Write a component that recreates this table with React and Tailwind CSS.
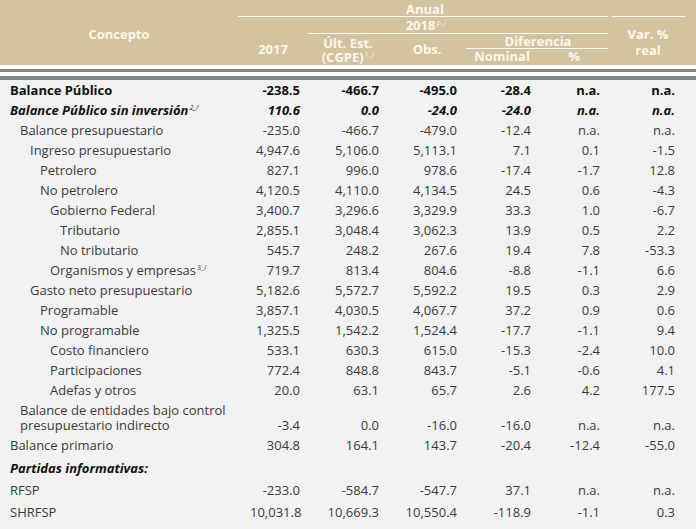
import React from "react";

const rows = [
  { label: "Balance Público", lv: 0, s: "b", v: ["-238.5", "-466.7", "-495.0", "-28.4", "n.a.", "n.a."] },
  { label: "Balance Público sin inversión", sup: "2_/", lv: 0, s: "bi", v: ["110.6", "0.0", "-24.0", "-24.0", "n.a.", "n.a."] },
  { label: "Balance presupuestario", lv: 1, v: ["-235.0", "-466.7", "-479.0", "-12.4", "n.a.", "n.a."] },
  { label: "Ingreso presupuestario", lv: 2, v: ["4,947.6", "5,106.0", "5,113.1", "7.1", "0.1", "-1.5"] },
  { label: "Petrolero", lv: 3, v: ["827.1", "996.0", "978.6", "-17.4", "-1.7", "12.8"] },
  { label: "No petrolero", lv: 3, v: ["4,120.5", "4,110.0", "4,134.5", "24.5", "0.6", "-4.3"] },
  { label: "Gobierno Federal", lv: 4, v: ["3,400.7", "3,296.6", "3,329.9", "33.3", "1.0", "-6.7"] },
  { label: "Tributario", lv: 5, v: ["2,855.1", "3,048.4", "3,062.3", "13.9", "0.5", "2.2"] },
  { label: "No tributario", lv: 5, v: ["545.7", "248.2", "267.6", "19.4", "7.8", "-53.3"] },
  { label: "Organismos y empresas", sup: "3_/", lv: 4, v: ["719.7", "813.4", "804.6", "-8.8", "-1.1", "6.6"] },
  { label: "Gasto neto presupuestario", lv: 2, v: ["5,182.6", "5,572.7", "5,592.2", "19.5", "0.3", "2.9"] },
  { label: "Programable", lv: 3, v: ["3,857.1", "4,030.5", "4,067.7", "37.2", "0.9", "0.6"] },
  { label: "No programable", lv: 3, v: ["1,325.5", "1,542.2", "1,524.4", "-17.7", "-1.1", "9.4"] },
  { label: "Costo financiero", lv: 4, v: ["533.1", "630.3", "615.0", "-15.3", "-2.4", "10.0"] },
  { label: "Participaciones", lv: 4, v: ["772.4", "848.8", "843.7", "-5.1", "-0.6", "4.1"] },
  { label: "Adefas y otros", lv: 4, v: ["20.0", "63.1", "65.7", "2.6", "4.2", "177.5"] },
];

const pad = ["pl-[10px]", "pl-[20px]", "pl-[30px]", "pl-[40px]", "pl-[50px]", "pl-[60px]"];
const cols = "grid grid-cols-[250px_50px_79px_78px_74px_69px_75px]";

function Sup({ children }) {
  return <span className="relative -top-[5px] ml-[1px] text-[7px] font-normal leading-none">{children}</span>;
}

function Row({ r }) {
  const style =
    r.s === "b" ? "font-bold text-[#111]" : r.s === "bi" ? "font-bold italic text-[#111]" : "text-[#3a3a3a]";
  return (
    <div className={`${cols} h-[20px] leading-[20px] ${style}`}>
      <div className={`${pad[r.lv]} whitespace-nowrap`}>
        {r.label}
        {r.sup && <Sup>{r.sup}</Sup>}
      </div>
      {r.v.map((x, i) => (
        <div key={i} className="text-right">
          {x}
        </div>
      ))}
    </div>
  );
}

function Values({ v, h = "h-[20px] leading-[20px]" }) {
  return v.map((x, i) => (
    <div key={i} className={`text-right ${h}`}>
      {x}
    </div>
  ));
}

export default function App() {
  return (
    <div
      className="w-[696px] h-[529px] bg-[#f2f2f2] text-[13px] overflow-hidden"
      style={{ fontFamily: "'Open Sans', 'Liberation Sans', sans-serif" }}
    >
      {/* header */}
      <div className="grid grid-cols-[238px_70px_80px_78px_74px_68px_88px] grid-rows-[17px_17px_15px_16px] h-[65px] bg-[#d4c39f] text-[#faf6ec] font-bold text-[13px]">
        <div className="col-start-1 row-start-1 row-span-4 flex items-center justify-center pt-[4px]">Concepto</div>
        <div className="col-start-2 col-span-5 row-start-1 border-b border-[#fbf8f0] flex items-end justify-center leading-[14px] pl-[4px]">
          Anual
        </div>
        <div className="col-start-3 col-span-4 row-start-2 border-b border-[#fbf8f0]" />
        <div className="col-start-2 col-span-5 row-start-2 flex items-end justify-center leading-[14px] pl-[6px] pb-[2px]">
          <span>
            2018<Sup>p_/</Sup>
          </span>
        </div>
        <div className="col-start-2 row-start-3 row-span-2 flex items-center justify-center">2017</div>
        <div className="col-start-3 row-start-3 row-span-2 flex flex-col items-center justify-center leading-[14px]">
          <span>Últ. Est.</span>
          <span>
            (CGPE)<Sup>1_/</Sup>
          </span>
        </div>
        <div className="col-start-4 row-start-3 row-span-2 flex items-center justify-center">Obs.</div>
        <div className="col-start-5 col-span-2 row-start-3 border-b border-[#fbf8f0] flex items-end justify-center leading-[14px] pl-[2px]">
          Diferencia
        </div>
        <div className="col-start-5 row-start-4 flex items-center justify-center pr-[2px]">Nominal</div>
        <div className="col-start-6 row-start-4 flex items-center justify-center">%</div>
        <div className="col-start-7 row-start-1 border-b border-[#fbf8f0] ml-[4px] mr-[11px]" />
        <div className="col-start-7 row-start-2 row-span-3 flex flex-col items-center justify-center leading-[16px] pr-[8px] pt-[2px]">
          <span>Var. %</span>
          <span>real</span>
        </div>
      </div>
      <div className="h-[4px] bg-white" />
      <div className="h-[3px] bg-[#858585]" />
      <div className="h-[4px] bg-white" />
      <div className="h-[4px] bg-[#858585]" />

      {/* body */}
      {rows.map((r, i) => (
        <Row key={i} r={r} />
      ))}

      <div className={`${cols} h-[35px] text-[#3a3a3a] items-end`}>
        <div className="pl-[20px] leading-[15px] self-start pt-[3px]">
          Balance de entidades bajo control
          <br />
          presupuestario indirecto
        </div>
        <Values v={["-3.4", "0.0", "-16.0", "-16.0", "n.a.", "n.a."]} h="leading-[15px] pb-[2px]" />
      </div>
      <Row r={{ label: "Balance primario", lv: 0, v: ["304.8", "164.1", "143.7", "-20.4", "-12.4", "-55.0"] }} />
      <div className="h-[24px] leading-[24px] pl-[10px] pt-[1px] font-bold italic text-[#111]">Partidas informativas:</div>
      <div className={`${cols} h-[22px] leading-[22px] text-[#3a3a3a]`}>
        <div className="pl-[10px]">RFSP</div>
        <Values v={["-233.0", "-584.7", "-547.7", "37.1", "n.a.", "n.a."]} h="" />
      </div>
      <div className={`${cols} h-[22px] leading-[22px] text-[#3a3a3a]`}>
        <div className="pl-[10px]">SHRFSP</div>
        <Values v={["10,031.8", "10,669.3", "10,550.4", "-118.9", "-1.1", "0.3"]} h="" />
      </div>
    </div>
  );
}
